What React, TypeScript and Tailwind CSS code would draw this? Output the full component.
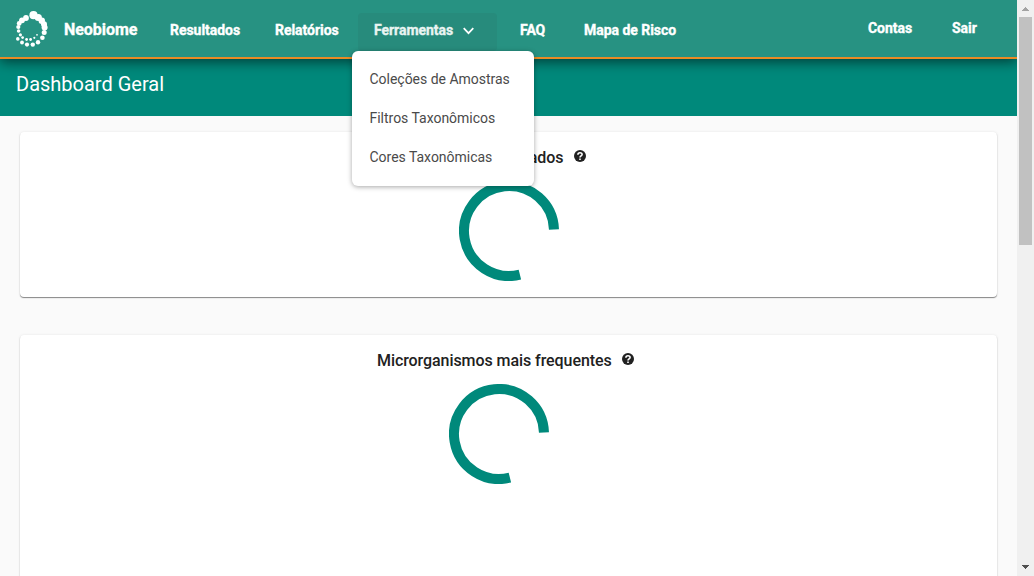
import React from "react";

const beads: [number, number, number][] = [
  [33.5, 15.2, 4.1], [38.3, 17.5, 3.6], [41.8, 20.8, 3.2], [44, 24.2, 3], [44.6, 27.4, 3], [44.2, 32.6, 2.5],
  [42.4, 37.8, 2.3], [38, 42.3, 2.2], [32.8, 44.6, 2.2], [27, 44.6, 2.1], [22, 42.5, 1.9], [17.8, 38.9, 1.8],
  [20.4, 34.8, 1.6], [18.6, 31, 1.8], [18.3, 27, 2.1], [19.2, 23.4, 2.4], [22, 20.3, 2.9], [26, 18, 2.9],
  [22.6, 37.6, 1.4], [26.6, 39.5, 1.4], [30.6, 39.5, 1.4], [34.3, 37.8, 1.1], [37, 34.8, 0.9],
];

function Logo() {
  return (
    <svg className="block h-[59px] w-[64px] shrink-0" viewBox="0 0 64 59" fill="#fff">
      {beads.map(([x, y, r]) => (
        <circle key={`${x}-${y}`} cx={x} cy={y} r={r} />
      ))}
    </svg>
  );
}

function Spinner() {
  return (
    <svg className="block size-[100px]" viewBox="-50 -50 100 100" fill="none" stroke="#00897b" strokeWidth="10">
      <path d="M10.9 43.66 A45 45 0 1 1 44.98 -1.5" />
    </svg>
  );
}

function Help() {
  return (
    <svg className="block size-[14px]" viewBox="0 0 14 14" fill="none">
      <circle cx="7" cy="7" r="6" fill="#212121" />
      <path d="M4.9 5.7 C4.9 3.1 9.1 3.1 9.1 5.5 C9.1 6.9 7 6.9 7 8.5" stroke="#fff" strokeWidth="1.6" />
      <path d="M6.2 9.4 H7.8 V10.9 H6.2Z" fill="#fff" />
    </svg>
  );
}

function Header() {
  return (
    <header className="relative z-10 flex h-[59px] border-b-2 border-[#e98b24] bg-[#279282] text-[14px] font-bold leading-[20px] tracking-[-0.04px] text-white shadow-[0_3px_12px_rgba(0,0,0,0.55)] [-webkit-text-stroke:0.35px_#fff]">
      <Logo />
      <span className="mt-5 w-[106px] text-[16px]">Neobiome</span>
      <span className="mt-5 w-[105px]">Resultados</span>
      <span className="mt-5 w-[83px]">Relatórios</span>
      <div className="relative mt-[13px] h-[38px] w-[139px] rounded bg-[#278b7c] pl-4 pt-[7px]">
        <div className="flex items-center text-[#e9f4f2] [-webkit-text-stroke:0.35px_#e9f4f2]">
          <span className="w-[89px]">Ferramentas</span>
          <svg className="mt-[2px] block h-[8px] w-[11px]" viewBox="0 0 11 8" fill="none" stroke="#fff" strokeWidth="1.7">
            <path d="M0.7 1.2 L5.5 6.2 L10.3 1.2" />
          </svg>
        </div>
        <nav className="absolute -left-[6px] top-[38px] flex h-[135px] w-[182px] flex-col rounded-md bg-white pl-[17.5px] pt-[9px] text-[14px] font-normal leading-[39px] tracking-[-0.02px] text-[#4a4a4a] shadow-[0_1px_5px_rgba(0,0,0,0.35)] [-webkit-text-stroke:0px]">
          <span>Coleções de Amostras</span>
          <span>Filtros Taxonômicos</span>
          <span>Cores Taxonômicas</span>
        </nav>
      </div>
      <span className="ml-[23px] mt-5 w-[64px]">FAQ</span>
      <span className="mt-5">Mapa de Risco</span>
      <span className="ml-auto mt-[18px] w-[84px]">Contas</span>
      <span className="mt-[18px] w-[65px]">Sair</span>
    </header>
  );
}

function Scrollbar() {
  return (
    <aside className="flex h-full w-[17px] shrink-0 flex-col items-center bg-[#f0f0f0]">
      <svg className="block h-[17px] w-[17px] shrink-0" viewBox="0 0 17 17" fill="#a3a3a3" shapeRendering="crispEdges">
        <path d="M5 11 L8.5 7 L12 11Z" />
      </svg>
      <div className="-ml-px h-[228px] w-[13px] bg-[#c1c1c1]" />
      <svg className="mt-auto block h-[17px] w-[17px] shrink-0" viewBox="0 0 17 17" fill="#505050" shapeRendering="crispEdges">
        <path d="M5 6 L12 6 L8.5 10Z" />
      </svg>
    </aside>
  );
}

export default function App() {
  return (
    <div className="flex h-[576px] w-[1034px] overflow-hidden bg-[#fafafa] font-[Roboto,sans-serif]">
      <main className="h-full w-[1017px] overflow-hidden">
        <Header />
        <div className="flex h-[57px] bg-[#00897b] pl-4 pt-[10px] text-[20px] leading-[30px] text-white">Dashboard Geral</div>
        <section className="mx-5 mt-4 flex h-[165px] flex-col items-center rounded bg-white pt-[14px] shadow-[0_1px_1px_rgba(0,0,0,0.45),0_0_3px_rgba(0,0,0,0.08)]">
          <div className="flex w-[156px] justify-end gap-[9px] text-[16px] font-medium leading-[24px] tracking-[-0.07px] text-[#212121]">
            <h2 className="whitespace-nowrap font-medium">Últimos resultados</h2>
            <div className="mt-[3px]"><Help /></div>
          </div>
          <div className="mt-[11px]"><Spinner /></div>
        </section>
        <section className="mx-5 mt-[38px] flex h-[300px] flex-col items-center rounded bg-white pt-[14px] shadow-[0_1px_1px_rgba(0,0,0,0.45),0_0_3px_rgba(0,0,0,0.08)]">
          <div className="flex w-[263px] text-[16px] font-medium leading-[24px] tracking-[-0.07px] text-[#212121]">
            <h2 className="w-[244px] font-medium">Microrganismos mais frequentes</h2>
            <div className="mt-[3px]"><Help /></div>
          </div>
          <div className="mr-5 mt-[11px]"><Spinner /></div>
        </section>
      </main>
      <Scrollbar />
    </div>
  );
}
